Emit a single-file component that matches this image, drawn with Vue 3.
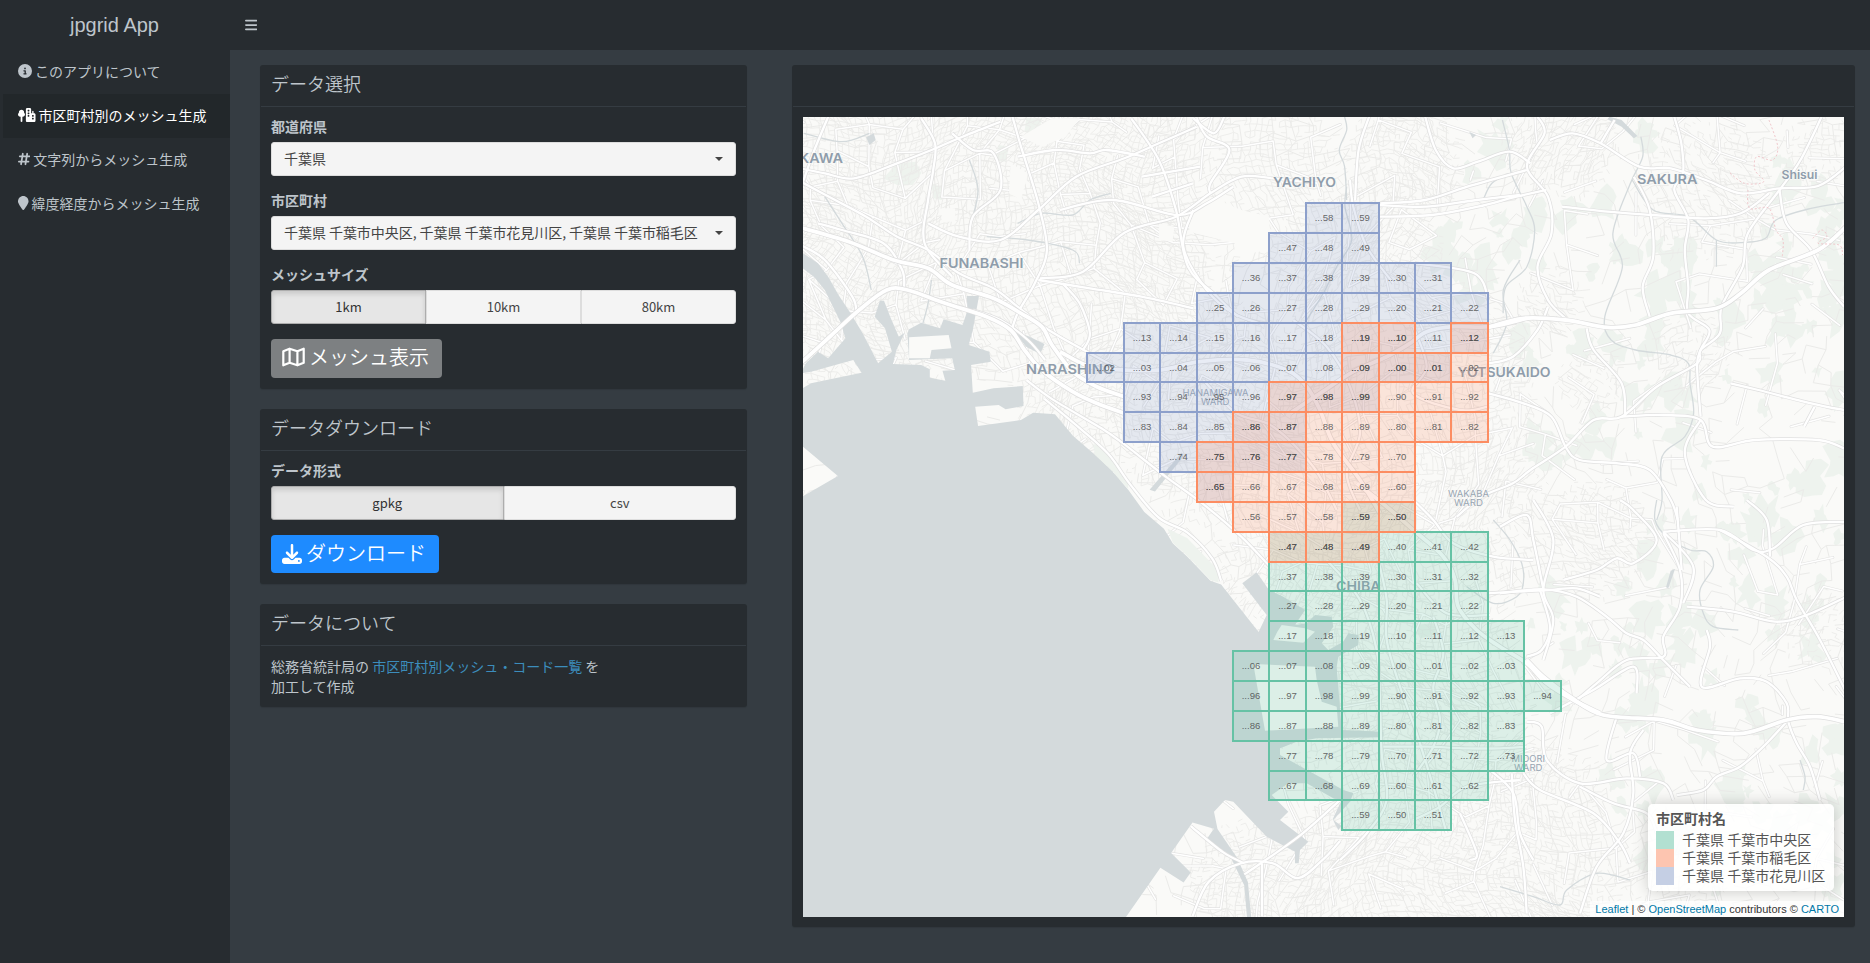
<script setup>
const icons = {
  info: { w: 14, box: '0 0 512 512', d: 'M256 512A256 256 0 1 0 256 0a256 256 0 1 0 0 512zM216 336h24V272H216c-13.3 0-24-10.7-24-24s10.7-24 24-24h48c13.3 0 24 10.7 24 24v88h8c13.3 0 24 10.7 24 24s-10.7 24-24 24H216c-13.3 0-24-10.7-24-24s10.7-24 24-24zm40-208a32 32 0 1 1 0 64 32 32 0 1 1 0-64z' },
  city: { w: 17.5, box: '0 0 640 512', d: 'M288 48c0-26.5 21.5-48 48-48h96c26.5 0 48 21.5 48 48V192h40V120c0-13.3 10.7-24 24-24s24 10.7 24 24v72h24c26.5 0 48 21.5 48 48V464c0 26.5-21.5 48-48 48H432 336c-26.5 0-48-21.5-48-48V48zm64 32v32c0 8.8 7.2 16 16 16h32c8.8 0 16-7.2 16-16V80c0-8.8-7.2-16-16-16H368c-8.8 0-16 7.2-16 16zm16 80c-8.8 0-16 7.2-16 16v32c0 8.8 7.2 16 16 16h32c8.8 0 16-7.2 16-16V176c0-8.8-7.2-16-16-16H368zM352 272v32c0 8.8 7.2 16 16 16h32c8.8 0 16-7.2 16-16V272c0-8.8-7.2-16-16-16H368c-8.8 0-16 7.2-16 16zm176-16c-8.8 0-16 7.2-16 16v32c0 8.8 7.2 16 16 16h32c8.8 0 16-7.2 16-16V272c0-8.8-7.2-16-16-16H528zM512 368v32c0 8.8 7.2 16 16 16h32c8.8 0 16-7.2 16-16V368c0-8.8-7.2-16-16-16H528c-8.8 0-16 7.2-16 16zM224 160c0 6-1 11-2 16c20 14 34 38 34 64c0 45-36 80-80 80H160V480c0 18-15 32-32 32c-18 0-32-14-32-32V320H80c-45 0-80-35-80-80c0-26 13-50 33-64c-1-5-1-10-1-16c0-53 42-96 96-96c53 0 96 43 96 96z' },
  hash: { w: 12.25, box: '0 0 448 512', d: 'M181.3 32.4c17.4 2.9 29.2 19.4 26.3 36.8L197.8 128h95.1l11.5-69.3c2.9-17.4 19.4-29.2 36.8-26.3s29.2 19.4 26.3 36.8L357.8 128H416c17.7 0 32 14.3 32 32s-14.3 32-32 32H347.1L325.8 320H384c17.7 0 32 14.3 32 32s-14.3 32-32 32H315.1l-11.5 69.3c-2.9 17.4-19.4 29.2-36.8 26.3s-29.2-19.4-26.3-36.8l9.8-58.7H155.1l-11.5 69.3c-2.9 17.4-19.4 29.2-36.8 26.3s-29.2-19.4-26.3-36.8L90.2 384H32c-17.7 0-32-14.3-32-32s14.3-32 32-32h68.9l21.3-128H64c-17.7 0-32-14.3-32-32s14.3-32 32-32h68.9l11.5-69.3c2.9-17.4 19.4-29.2 36.8-26.3zM187.1 192L165.8 320h95.1l21.3-128H187.1z' },
  pin: { w: 10.5, box: '0 0 384 512', d: 'M384 192c0 87.4-117 243-168.3 307.2c-12.3 15.3-35.1 15.3-47.4 0C117 435 0 279.4 0 192C0 86 86 0 192 0S384 86 384 192z' },
}
const menu = [
  { icon: icons.info, text: 'このアプリについて' },
  { icon: icons.city, text: '市区町村別のメッシュ生成', active: true },
  { icon: icons.hash, text: '文字列からメッシュ生成' },
  { icon: icons.pin, text: '緯度経度からメッシュ生成' },
]

/* ---------- mesh cells ---------- */
const colX = [1087, 1124, 1160, 1197, 1233, 1269, 1306, 1342, 1379, 1415, 1451, 1488, 1524, 1561]
const rowY = [203, 233, 263, 293, 323, 353, 382, 412, 442, 472, 502, 532, 562, 591, 621, 651, 681, 711, 741, 771, 800, 830]
const wards = [
  { name: 'chuo', rows: [[10, 7, 8], [11, 5, 10], [12, 5, 10], [13, 5, 10], [14, 5, 11], [15, 4, 11], [16, 4, 12], [17, 4, 11], [18, 5, 11], [19, 5, 10], [20, 7, 9]] },
  { name: 'hanamigawa', rows: [[0, 6, 7], [1, 5, 7], [2, 4, 9], [3, 3, 10], [4, 1, 10], [5, 0, 9], [6, 1, 7], [7, 1, 5], [8, 2, 5], [9, 3, 3]] },
  { name: 'inage', rows: [[4, 7, 8], [4, 10, 10], [5, 7, 10], [6, 5, 10], [7, 4, 10], [8, 3, 8], [9, 3, 8], [10, 4, 8], [11, 5, 7]] },
]
const cells = wards.flatMap((ward) =>
  ward.rows.flatMap(([r, from, to]) => {
    const list = []
    for (let c = from; c <= to; c++) {
      list.push({
        key: `${ward.name}-${r}-${c}`,
        ward: ward.name,
        x: colX[c], y: rowY[r], w: colX[c + 1] - colX[c], h: rowY[r + 1] - rowY[r],
        label: `...${(25 - r) % 10}${(c + 2) % 10}`,
      })
    }
    return list
  })
)

/* ---------- base map ---------- */
// Each sheet has its own origin and scale; points are projected to page units.
const sheet = (ox, oy, sx, sy) => (text) =>
  text.trim().split(/\s+/).map((p) => {
    const [x, y] = p.split(',').map(Number)
    return [ox + x / sx, oy + y / sy]
  })
const nw = sheet(780, 50, 2.904, 3)
const mid = sheet(1060, 180, 3, 3)
const port = sheet(1200, 500, 3, 3)
const ne = sheet(1320, 100, 2.851, 3)
const se = sheet(1500, 500, 3, 3)
const bay = sheet(780, 380, 2.8, 2.69)

const f = (n) => n.toFixed(1)
const poly = (pts) => 'M' + pts.map(([x, y]) => `${f(x)} ${f(y)}`).join('L') + 'Z'
const curve = (pts) => {
  let d = `M${f(pts[0][0])} ${f(pts[0][1])}`
  for (let i = 0; i < pts.length - 1; i++) {
    const a = pts[i - 1] || pts[i], b = pts[i], c = pts[i + 1], e = pts[i + 2] || c
    d += `C${f(b[0] + (c[0] - a[0]) / 6)} ${f(b[1] + (c[1] - a[1]) / 6)} ${f(c[0] - (e[0] - b[0]) / 6)} ${f(c[1] - (e[1] - b[1]) / 6)} ${f(c[0])} ${f(c[1])}`
  }
  return d
}

const sea = poly([
  ...nw('60,1018 90,1000 237,968 213,930 90,965 60,970 75,940 110,905 140,925 190,865 175,815 130,720 100,682 60,650 60,605 110,640 140,680 170,735 205,790 240,850 285,940 325,905 305,835 275,800 290,752 302,752 320,800 345,860 362,848 338,900 328,942 410,945 435,958 435,983 480,992 472,962 508,960 500,925 375,930 370,850 375,838 410,818 465,835 475,808 530,825 545,780 542,738 578,738 560,840 548,885 608,905 612,935 555,945 560,1028 620,1015 705,1008 707,1068 655,1078 635,1065 567,1070 575,1128 700,1110 735,1088 790,1092'),
  ...bay('770,92 820,150 880,200 930,245 975,295 1020,355 1075,400 1100,440 1140,475 1205,540 1235,550 1340,678'),
  ...port('200,345 127,250 170,217 207,270 250,290 315,330 285,375 320,370 345,345 395,350 400,380 365,430 385,450 430,425 445,400 475,405 475,435 415,470 410,500 425,690 550,695 550,712 350,715 290,725 240,745 240,765 430,870 460,880 450,905 400,960 425,978 415,990 398,958 425,900 400,895 320,850 265,850 215,885 235,905 265,935 240,960 325,1025 300,1050 296,1090 285,1090 285,1055 200,1010 100,905 75,900 42,935'),
  ...bay('1225,1208 1280,1285 1310,1350 1320,1450 1308,1450 1300,1360 1265,1290 1195,1235 1215,1207 1155,1190 1095,1272 1150,1325 1130,1352 1065,1312 965,1450 40,1450 40,326 162,258 40,160 40,10'),
])
const channels = [nw('680,845 720,858 768,882 755,912 715,890'), se('525,207 505,265 498,262 512,212'), ne('825,50 860,60 905,108 895,115 860,80 820,58'), bay('1125,195 1130,205 1050,300 1035,295'), nw('250,262 272,250 278,270 260,285'), ne('425,95 445,105 435,115')].map(poly)
const islands = [port('160,492 345,500 350,540 365,605 410,620 415,680 195,692'), port('232,395 245,375 315,385 345,395 310,428 220,420'), nw('375,862 490,855 498,895 440,900 435,925 375,925')].map(poly)

const streams = [
  ne('70,50 76,90 55,150 70,200 76,300'), ne('520,60 540,150 545,220 590,320 612,390 590,500 530,560 522,640'),
  ne('915,110 920,170 885,250 835,400 862,500 812,650 830,720 900,750 1000,765 1050,790 1055,850 1065,940 1040,1010 975,1070 975,1200 960,1260'),
  ne('890,240 950,330 1050,350 1130,420 1200,428 1270,415 1300,360 1400,325 1494,308'), ne('1130,420 1130,500'), ne('465,300 490,250 540,220'),
  mid('860,20 855,80 875,180 830,260 790,340 740,420'), mid('1380,240 1330,330 1340,430 1300,520'),
  port('880,60 930,120 965,190 970,250 950,290 880,310 800,260'), se('470,0 465,60 500,110 570,150 620,155 640,200 600,270 610,340 640,380 715,390'),
  nw('70,250 180,275 260,250'), nw('130,440 180,520 240,620 265,720'), nw('550,330 575,420 555,520'), nw('690,520 760,490 850,495 900,450 960,430'), nw('600,560 720,570 850,600 870,640'),
  nw('440,690 430,760 415,820'), se('0,1160 100,1190 180,1215 200,1170 290,1120 390,1140'), se('900,780 915,830 910,870'),
].map(curve)

const highways = [
  nw('60,533 200,575 330,630 430,655 500,705 620,745 700,790 760,830 790,885 850,965 920,1010 1000,1040'),
  nw('60,940 150,855 230,780 310,720 370,720 480,760 600,800 670,840 710,900 760,960 850,1025 920,1060 1000,1090'),
  mid('0,515 90,560 190,570 300,570 420,545 560,540 680,570 740,620 780,690 820,790 900,900 960,1000'),
  mid('690,700 780,640 880,575 980,530 1050,490 1100,455 1180,440 1290,440 1400,415'),
  ne('480,682 580,655 700,660 820,682 900,675 1000,640 1130,625 1200,580 1280,510 1420,450 1500,380'),
  port('470,-50 560,20 640,90 730,170 765,240 775,320 830,390 900,440 980,490 1040,550 1120,600 1200,640'),
  se('80,480 130,530 210,590 310,645 490,660 590,690 730,700 860,660 950,650 1040,666'),
].map(curve)

const mains = [
  nw('60,585 130,630 210,740 222,790'), nw('60,395 160,450 250,500 340,560 430,600 520,670 620,715 690,770 780,840 900,910 990,960'),
  nw('60,355 130,370 215,385 340,340 440,300 530,260 640,215'), nw('675,200 700,290 750,460 775,600 740,700 690,790 670,850'),
  nw('410,205 450,280 445,360 430,450 420,580 500,680'), nw('140,200 100,300 67,395'), nw('430,520 520,560 640,570 750,480 860,380 1000,325 1100,280 1210,230'),
  nw('750,690 900,715 1050,740 1200,775'), nw('755,685 880,665 1000,548 1150,500 1250,430 1340,380 1430,385 1560,400'),
  nw('1020,205 1100,330 1150,480 1185,650 1270,740 1330,800'), nw('1210,205 1240,260 1305,300 1250,400 1250,430'), nw('1200,205 1260,250 1290,200'),
  nw('360,720 355,660 300,580 180,540 110,520'), nw('820,700 870,760 900,850 880,900'), nw('500,250 560,300 620,310 640,420 560,500 550,600'), nw('1050,380 1220,350'),
  nw('1080,440 1200,400'), nw('690,320 800,300 900,310 950,300 1060,320'), nw('560,780 640,810 720,870 770,930'),
  mid('0,90 160,60 350,105 440,70 520,20'), mid('400,90 370,200 440,330 520,400 600,430'), mid('960,75 1100,80 1250,60 1380,45'), mid('870,0 880,80 920,200 1000,310'),
  mid('1060,440 1100,560 1060,640 1200,690 1284,680'), mid('700,420 800,500 870,620 900,760 860,880 900,990'), mid('430,600 530,700 640,740 760,860 830,990'),
  ne('620,50 640,100 590,200 650,290 660,400 620,500 650,600 700,655'), ne('140,50 110,150 100,300'), ne('172,310 300,300 420,260 590,210'), ne('170,350 320,345 450,320 560,290 645,270'),
  ne('300,50 330,150 380,205 450,185 540,155 600,190'), ne('655,120 720,100 800,130 910,200 1000,205 1100,240 1200,280 1310,265 1420,258 1500,200'), ne('840,60 800,130'),
  ne('1010,50 1030,130 1035,220 1010,270 1050,360 1040,450 1050,560 1050,640 1110,690 1085,750 1075,800 1085,950'), ne('690,320 820,335 950,345 1100,355 1200,340 1280,280'),
  ne('1430,50 1370,180 1310,270 1220,400 1205,500 1145,620 1140,700 1085,750 1075,790 960,860 860,950 780,960 700,1040 600,1110 550,1150 460,1190 390,1250'),
  ne('1310,270 1330,370 1400,450 1450,560 1494,620'), ne('480,880 580,910 660,950 700,1040 740,1080 850,1090 940,1110 1000,1200 1020,1260'),
  ne('860,950 980,945 1085,960 1120,1040 1240,1020 1420,1020 1494,1045'), ne('760,685 780,750 860,850 870,950'), ne('1170,850 1250,870 1400,910 1494,930'),
  ne('480,790 550,770 620,690 650,620'), ne('1085,960 1040,1060 1100,1200 1180,1220'), ne('270,490 440,520 480,600'), ne('1410,920 1380,980'), ne('895,230 940,330 950,470 920,560 940,650'),
  port('860,280 950,275 1050,270 1130,265 1200,290'), port('640,0 700,60 760,130 880,170 1000,180'), port('1000,0 1060,120 1030,270 1060,360 1030,480'),
  port('535,180 560,300 560,420 600,560 650,700 700,860 740,1000'), port('380,180 480,300 530,450 540,600 545,760 560,900 500,1000 420,1080'), port('700,350 730,460 700,560 720,660 700,740 640,830'),
  port('550,740 680,740 800,745 900,745 980,740'), port('650,250 740,340 870,345'), port('780,940 830,1060 810,1080'), port('870,810 940,880 960,1000 1000,1080'), port('640,960 720,920 800,860 960,840'),
  se('0,280 130,268 230,290 320,350 380,400 430,420 490,480 570,560'), se('0,80 80,45 100,120 130,268'), se('190,240 290,210 350,175 400,190 470,120 400,30 360,0'),
  se('490,100 540,210 540,320 490,410 490,470 380,480 290,550 220,610'), se('490,95 580,200 550,310'), se('490,95 660,90 760,150 820,145 910,75 1040,65'), se('660,90 800,170 860,230 890,300 960,420 1040,580'),
  se('560,320 700,335 825,365 920,345 1040,290'), se('620,390 630,440 605,560 720,535 800,545 860,610 865,665 890,730 930,800 960,900'), se('530,20 545,210'), se('860,665 790,740 720,800 650,830 610,870 530,885'),
  se('80,665 125,680 140,780 240,850 380,835 490,850 520,900'), se('150,640 280,570 400,500 410,580'), se('70,820 120,870 280,940 360,1030 390,1090'), se('240,860 340,910 440,940 470,1000'),
  se('350,650 320,780 400,760 420,830'), se('120,270 150,380 125,450 80,470'), se('35,820 45,960 70,1100 80,1240'), se('740,0 800,60 810,170'), se('430,690 390,760 400,880 370,1000 290,1100 240,1240'),
  bay('1155,1443 1200,1350 1290,1300 1380,1300 1450,1340 1520,1290 1568,1240'), bay('740,50 840,130 920,200 980,280 1060,370 1140,410 1210,480 1235,540'), bay('690,0 760,50 900,130 960,170 1080,260 1180,330 1290,420 1370,500'),
  bay('1350,1300 1350,1443'), bay('1150,1200 1240,1270 1300,1300'), bay('1568,1130 1450,1230 1300,1330'),
].map(curve)

let seed = 20231
const rnd = () => {
  seed = (seed * 1664525 + 1013904223) >>> 0
  return seed / 4294967296
}
const towns = [[900, 190, 190, 1], [1060, 210, 170, 1], [860, 300, 110, 0.8], [1120, 340, 120, 0.8], [1230, 420, 110, 0.9], [1350, 250, 90, 0.8], [1400, 400, 130, 0.8], [1330, 540, 110, 0.9], [1400, 690, 130, 0.8], [1450, 520, 110, 0.6], [1560, 140, 60, 0.7], [1700, 190, 80, 0.5], [1820, 150, 40, 0.6], [1590, 540, 60, 0.7], [1520, 850, 110, 0.8], [1380, 880, 110, 0.9], [1250, 880, 60, 0.8], [1660, 880, 80, 0.4], [1820, 630, 50, 0.4], [1550, 300, 40, 0.5], [1690, 350, 45, 0.5], [1270, 170, 70, 0.9], [1400, 160, 60, 0.9], [1590, 380, 35, 0.6]]
const density = (x, y) => {
  let v = 0.08
  for (const [a, b, r, k] of towns) {
    const t = 1 - Math.hypot(x - a, y - b) / (r * 1.25)
    if (t > 0) v = Math.max(v, k * Math.min(1, t * 2.2))
  }
  return v
}
const warp = (x, y) => [
  x + 16 * Math.sin(y / 47 + x / 83) + 7 * Math.sin(y / 19 + 2),
  y + 16 * Math.sin(x / 53 - y / 91) + 7 * Math.sin(x / 23 + 1),
]
const mesh = (x0, x1, y0, y1, step, jitter, keep) => {
  const nodes = []
  for (let y = y0; y <= y1; y += step) {
    const row = []
    for (let x = x0; x <= x1; x += step) {
      const [wx, wy] = warp(x, y)
      row.push([wx + (rnd() - 0.5) * jitter, wy + (rnd() - 0.5) * jitter])
    }
    nodes.push(row)
  }
  let d = ''
  for (let j = 0; j < nodes.length - 1; j++) {
    for (let i = 0; i < nodes[j].length - 1; i++) {
      const [x, y] = nodes[j][i]
      for (const n of [nodes[j][i + 1], nodes[j + 1][i]]) {
        if (rnd() < keep(x, y)) d += `M${f(x)} ${f(y)}L${f(n[0])} ${f(n[1])}`
      }
    }
  }
  return d
}
const lanes = mesh(770, 1880, 85, 950, 5, 3.5, (x, y) => { const v = density(x, y); return v > 0.3 ? v * 0.78 : 0 })
const streets = mesh(770, 1880, 85, 950, 15, 11, (x, y) => 0.34 + density(x, y) * 0.36)
const avenues = mesh(770, 1880, 85, 950, 30, 20, (x, y) => 0.14 + density(x, y) * 0.46)

const parks = []
for (let i = 0; i < 330; i++) {
  const x = 1420 + rnd() * 430, y = 120 + rnd() * 780
  if (density(x, y) > 0.4) continue
  const r = 5 + rnd() * 13, pts = []
  for (let k = 0; k < 13; k++) {
    const q = r * (0.35 + rnd() * 0.95)
    pts.push([x + q * Math.cos(k * 0.483), y + q * 1.2 * Math.sin(k * 0.483)])
  }
  parks.push(poly(pts))
}
parks.push(...[
  nw('300,385 340,340 395,335 410,370 385,405 340,405'), nw('715,205 760,205 750,260 710,245'), nw('635,285 665,290 655,335 625,330'), nw('440,400 475,415 470,450 445,445'),
  mid('95,790 140,820 205,920 170,895 115,840'), port('640,375 700,370 720,400 660,415'),
].map(poly))
const shoreParks = [bay('880,170 915,200 975,270 975,293 930,244 880,199'), bay('1085,400 1140,425 1225,510 1228,545 1205,538 1140,473 1100,438')].map(poly)
const clearings = [nw('1180,490 1250,440 1340,480 1420,500 1425,600 1330,615 1320,580 1190,545'), nw('670,340 720,370 700,450 665,430'), nw('468,475 508,475 510,515 470,515'), nw('1100,520 1145,530 1140,575 1100,570'), nw('700,260 790,205 870,205 830,260 760,290')].map(poly)

const places = [
  { t: 'KAWA', x: 799, y: 163, w: 44 }, { t: 'FUNABASHI', x: 939.5, y: 268, w: 84 }, { t: 'YACHIYO', x: 1273, y: 187, w: 63 }, { t: 'NARASHINO', x: 1026, y: 374, w: 88 },
  { t: 'YOTSUKAIDO', x: 1457.5, y: 377, w: 93 }, { t: 'SAKURA', x: 1637, y: 184, w: 60.5 }, { t: 'CHIBA', x: 1336, y: 591, w: 44.5 }, { t: 'Shisui', x: 1781.5, y: 179, w: 36, k: 'town' },
  { t: 'WAKABA', x: 1448, y: 497, w: 41, k: 'ward' }, { t: 'WARD', x: 1454, y: 506, w: 29, k: 'ward' }, { t: 'HANAMIGAWA', x: 1182.5, y: 395.7, w: 66, k: 'ward' }, { t: 'WARD', x: 1201, y: 404.7, w: 28.5, k: 'ward' },
  { t: 'MIDORI', x: 1511.5, y: 761.7, w: 33.5, k: 'ward' }, { t: 'WARD', x: 1514, y: 770.8, w: 28.5, k: 'ward' },
]
const borders = [ne('1280,60 1305,140 1290,180 1245,170 1240,210 1265,245 1210,250 1165,215'), ne('1220,270 1225,325 1280,325 1300,390 1320,420 1318,470'), ne('1405,415 1430,390 1445,410 1420,430 1480,435 1490,465')].map(curve)
</script>

<template>
  <div class="app">
    <aside class="sidebar">
      <div class="brand">jpgrid App</div>
      <nav class="menu">
        <a v-for="m in menu" :key="m.text" class="menu-item" :class="{ active: m.active }">
          <svg class="menu-icon" :width="m.icon.w" height="14" :viewBox="m.icon.box"><path :d="m.icon.d" /></svg>
          <span>{{ m.text }}</span>
        </a>
      </nav>
    </aside>

    <div class="main">
      <header class="topbar">
        <svg width="12.25" height="14" viewBox="0 0 448 512"><path d="M0 96C0 78.300 14.300 64 32 64H416c17.700 0 32 14.300 32 32s-14.300 32-32 32H32C14.300 128 0 113.700 0 96zM0 256c0-17.700 14.300-32 32-32H416c17.700 0 32 14.300 32 32s-14.300 32-32 32H32c-17.700 0-32-14.300-32-32zM448 416c0 17.700-14.300 32-32 32H32c-17.700 0-32-14.300-32-32s14.300-32 32-32H416c17.700 0 32 14.300 32 32z" /></svg>
      </header>

      <div class="content">
        <div class="left">
          <section class="card">
            <h3 class="card-title">データ選択</h3>
            <div class="card-body">
              <label class="label">都道府県</label>
              <div class="select"><span>千葉県</span><i class="caret"></i></div>
              <label class="label">市区町村</label>
              <div class="select"><span>千葉県 千葉市中央区, 千葉県 千葉市花見川区, 千葉県 千葉市稲毛区</span><i class="caret"></i></div>
              <label class="label">メッシュサイズ</label>
              <div class="segments">
                <button class="segment on">1km</button><button class="segment">10km</button><button class="segment">80km</button>
              </div>
              <button class="button gray">
                <svg width="23" height="20" viewBox="0 0 23 20"><path d="M1.300 4.200 7.600 1.700 15.400 4.200 21.700 1.700V15.800L15.400 18.300 7.600 15.800 1.300 18.300ZM7.600 1.700V15.800M15.400 4.200V18.300" fill="none" stroke="#fff" stroke-width="2.200" stroke-linejoin="round" /></svg>
                <span>メッシュ表示</span>
              </button>
            </div>
          </section>

          <section class="card">
            <h3 class="card-title">データダウンロード</h3>
            <div class="card-body">
              <label class="label">データ形式</label>
              <div class="segments">
                <button class="segment on">gpkg</button><button class="segment">csv</button>
              </div>
              <button class="button blue">
                <svg width="20" height="20" viewBox="0 0 512 512"><path fill="#fff" d="M288 32c0-17.700-14.300-32-32-32s-32 14.300-32 32V274.700l-73.400-73.400c-12.500-12.500-32.800-12.500-45.300 0s-12.500 32.800 0 45.300l128 128c12.500 12.500 32.800 12.500 45.300 0l128-128c12.500-12.500 12.500-32.800 0-45.300s-32.800-12.500-45.300 0L288 274.700V32zM64 352c-35.300 0-64 28.700-64 64v32c0 35.300 28.700 64 64 64H448c35.300 0 64-28.700 64-64V416c0-35.300-28.700-64-64-64H346.500l-45.300 45.300c-25 25-65.500 25-90.500 0L165.500 352H64zm368 56a24 24 0 1 1 0 48 24 24 0 1 1 0-48z" /></svg>
                <span>ダウンロード</span>
              </button>
            </div>
          </section>

          <section class="card">
            <h3 class="card-title">データについて</h3>
            <div class="card-body about">
              総務省統計局の <a class="link">市区町村別メッシュ・コード一覧</a> を<br />加工して作成
            </div>
          </section>
        </div>

        <section class="card map-card">
          <h3 class="card-title"></h3>
          <div class="map">
            <svg class="map-svg" width="1041" height="800" viewBox="803 117 1041 800">
              <path v-for="(d, i) in parks" :key="'p' + i" class="park" :d="d" />
              <path class="lane" :d="lanes" />
              <path class="street" :d="streets" />
              <path class="avenue-case" :d="avenues" />
              <path class="avenue" :d="avenues" />
              <path v-for="(d, i) in clearings" :key="'f' + i" class="land" :d="d" />
              <path v-for="(d, i) in streams" :key="'r' + i" class="stream" :d="d" />
              <path class="water" :d="sea" />
              <path v-for="(d, i) in shoreParks" :key="'s' + i" class="park" :d="d" />
              <path v-for="(d, i) in channels" :key="'c' + i" class="water" :d="d" />
              <path v-for="(d, i) in islands" :key="'i' + i" class="land" :d="d" />
              <path v-for="(d, i) in mains" :key="'mc' + i" class="main-case" :d="d" />
              <path v-for="(d, i) in mains" :key="'m' + i" class="main-road" :d="d" />
              <path v-for="(d, i) in highways" :key="'hc' + i" class="high-case" :d="d" />
              <path v-for="(d, i) in highways" :key="'h' + i" class="high" :d="d" />
              <path v-for="(d, i) in borders" :key="'b' + i" class="border" :d="d" />
              <text v-for="p in places" :key="p.t + p.x" class="place" :class="p.k" :x="p.x" :y="p.y" :textLength="p.w" lengthAdjust="spacingAndGlyphs">{{ p.t }}</text>
              <rect v-for="c in cells" :key="c.key" :class="c.ward" class="cell" :x="c.x" :y="c.y" :width="c.w" :height="c.h" />
              <text v-for="c in cells" :key="'t' + c.key" class="code" :x="c.x + c.w / 2" :y="c.y + 18">{{ c.label }}</text>
            </svg>
            <div class="legend">
              <strong class="legend-title">市区町村名</strong>
              <div class="legend-row"><i class="swatch green"></i>千葉県 千葉市中央区</div>
              <div class="legend-row"><i class="swatch orange"></i>千葉県 千葉市稲毛区</div>
              <div class="legend-row"><i class="swatch purple"></i>千葉県 千葉市花見川区</div>
            </div>
            <div class="credit"><a>Leaflet</a> | © <a>OpenStreetMap</a> contributors © <a>CARTO</a></div>
          </div>
        </section>
      </div>
    </div>
  </div>
</template>

<style>
body { margin: 0; background: #353c42; }
</style>

<style scoped>
* { box-sizing: border-box; }
.app { display: flex; height: 963px; overflow: hidden; background: #353c42; color: #bec5cb; font: 14px/20px "Noto Sans CJK JP", sans-serif; }
.sidebar { width: 230px; flex: none; background: #272c30; }
.brand { height: 50px; padding-right: 1px; line-height: 50px; text-align: center; font-family: "Liberation Sans", Arial, sans-serif; font-size: 20px; }
.menu { display: flex; flex-direction: column; }
.menu-item { display: flex; align-items: center; gap: 3px; height: 44px; padding: 0 15px 2px; border-left: 3px solid transparent; white-space: nowrap; }
.menu-item.active { background: #22272a; background-clip: padding-box; color: #fff; }
.menu-icon { flex: none; fill: currentColor; }
.main { flex: 1; min-width: 0; }
.topbar { height: 50px; padding: 0 15px 1px; display: flex; align-items: center; background: #272c30; }
.topbar svg { fill: #bec5cb; }
.content { display: flex; align-items: flex-start; gap: 45px; padding: 15px 15px 0 30px; }
.left { width: 487px; display: flex; flex-direction: column; gap: 20px; flex: none; }
.card { background: #272c30; border-radius: 3px; box-shadow: 0 1px 1px rgba(0, 0, 0, 0.1); padding: 0 1px; }
.card-title { height: 42px; margin: 0; padding: 5px 10px 0; border-bottom: 1px solid #353c42; font-size: 18px; line-height: 26px; font-weight: 350; color: #bec5cb; }
.card-body { padding: 10px 10px 11px; }
.label { display: block; font-weight: 700; line-height: 18px; margin-bottom: 7px; }
.select { height: 34px; margin-bottom: 15px; padding: 0 12px; display: flex; align-items: center; justify-content: space-between; background: #f4f4f4; border: 1px solid #ddd; border-radius: 3px; color: #444; white-space: nowrap; }
.select span { padding-bottom: 2px; letter-spacing: -0.05px; }
.caret { border: 4px solid transparent; border-top-color: #444; border-bottom: 0; }
.segments { display: flex; height: 34px; margin-bottom: 15px; }
.segment { flex: 1; border: 1px solid #ddd; background: #f4f4f4; color: #444; font: 13px/20px "Noto Sans CJK JP", sans-serif; padding: 0 0 1px; }
.segment:first-child { border-radius: 3px 0 0 3px; }
.segment:last-child { border-radius: 0 3px 3px 0; }
.segment.on { background: #e6e6e6; border-color: #adadad; color: #333; box-shadow: inset 0 3px 5px rgba(0, 0, 0, 0.125); }
.button { display: flex; align-items: center; gap: 4px; height: 39px; border: 0; border-radius: 4px; padding: 0 12px 3px 11px; color: #fff; font: 350 20px/28px "Noto Sans CJK JP", sans-serif; white-space: nowrap; }
.button svg { flex: none; }
.button.gray { background: #7d8082; width: 171px; }
.button.blue { background: #1e8bff; width: 168px; height: 38px; padding-bottom: 1px; }
.button.blue span { padding-bottom: 2px; }
.about { height: 61px; }
.link { color: #3c8dbc; }
.map-card { flex: 1; height: 862px; }
.map { position: relative; width: 1041px; height: 800px; margin: 10px 0 0 10px; background: #fafaf8; overflow: hidden; }
.map-svg { display: block; }
.land { fill: #fafaf8; }
.water { fill: #d4dadc; }
.park { fill: #eef3ee; }
.stream { fill: none; stroke: #d4dadc; stroke-width: 1.3; }
.lane { fill: none; stroke: #ececea; stroke-width: 0.9; }
.street { fill: none; stroke: #ebebe9; stroke-width: 1; }
.avenue-case { fill: none; stroke: #e4e4e3; stroke-width: 2.8; stroke-linecap: round; }
.avenue { fill: none; stroke: #fff; stroke-width: 1.5; stroke-linecap: round; }
.main-case { fill: none; stroke: #e0e0e0; stroke-width: 3.7; }
.main-road { fill: none; stroke: #fff; stroke-width: 2.3; }
.high-case { fill: none; stroke: #dedede; stroke-width: 5.2; }
.high { fill: none; stroke: #fff; stroke-width: 3.8; }
.border { fill: none; stroke: #f0c8cc; stroke-width: 1; stroke-dasharray: 2 2; }
.place { font: 600 13px Inter, sans-serif; fill: #8f9dab; stroke: #fafaf8; stroke-width: 1px; paint-order: stroke; }
.place.town { font-size: 11.5px; }
.place.ward { font-size: 9px; font-weight: 400; fill: #98a5b2; stroke-width: 0.5px; }
.cell { stroke-width: 2; fill-opacity: 0.2; }
.chuo { fill: #66c2a5; stroke: #66c2a5; }
.inage { fill: #fc8d62; stroke: #fc8d62; }
.hanamigawa { fill: #8da0cb; stroke: #8da0cb; }
.code { font: 9.6px "Liberation Sans", Arial, sans-serif; fill: #4c4c4c; fill-opacity: 0.85; text-anchor: middle; }
.legend { position: absolute; right: 10px; bottom: 26px; width: 186px; height: 87px; padding: 5px 8px; background: rgba(255, 255, 255, 0.85); border-radius: 5px; box-shadow: 0 0 15px rgba(0, 0, 0, 0.2); color: #555; line-height: 18px; white-space: nowrap; }
.legend-title { display: block; height: 22px; }
.legend-row { display: flex; height: 18px; line-height: 16px; }
.swatch { width: 18px; height: 18px; margin-right: 8px; }
.swatch.green { background: #b2e0d1; }
.swatch.orange { background: #fdc5b0; }
.swatch.purple { background: #c5cfe4; }
.credit { position: absolute; right: 0; bottom: 0; height: 16px; padding: 0 5px; background: rgba(255, 255, 255, 0.7); color: #333; font: 11px/16px "Liberation Sans", Arial, sans-serif; white-space: nowrap; }
.credit a { color: #0078a8; }
</style>
